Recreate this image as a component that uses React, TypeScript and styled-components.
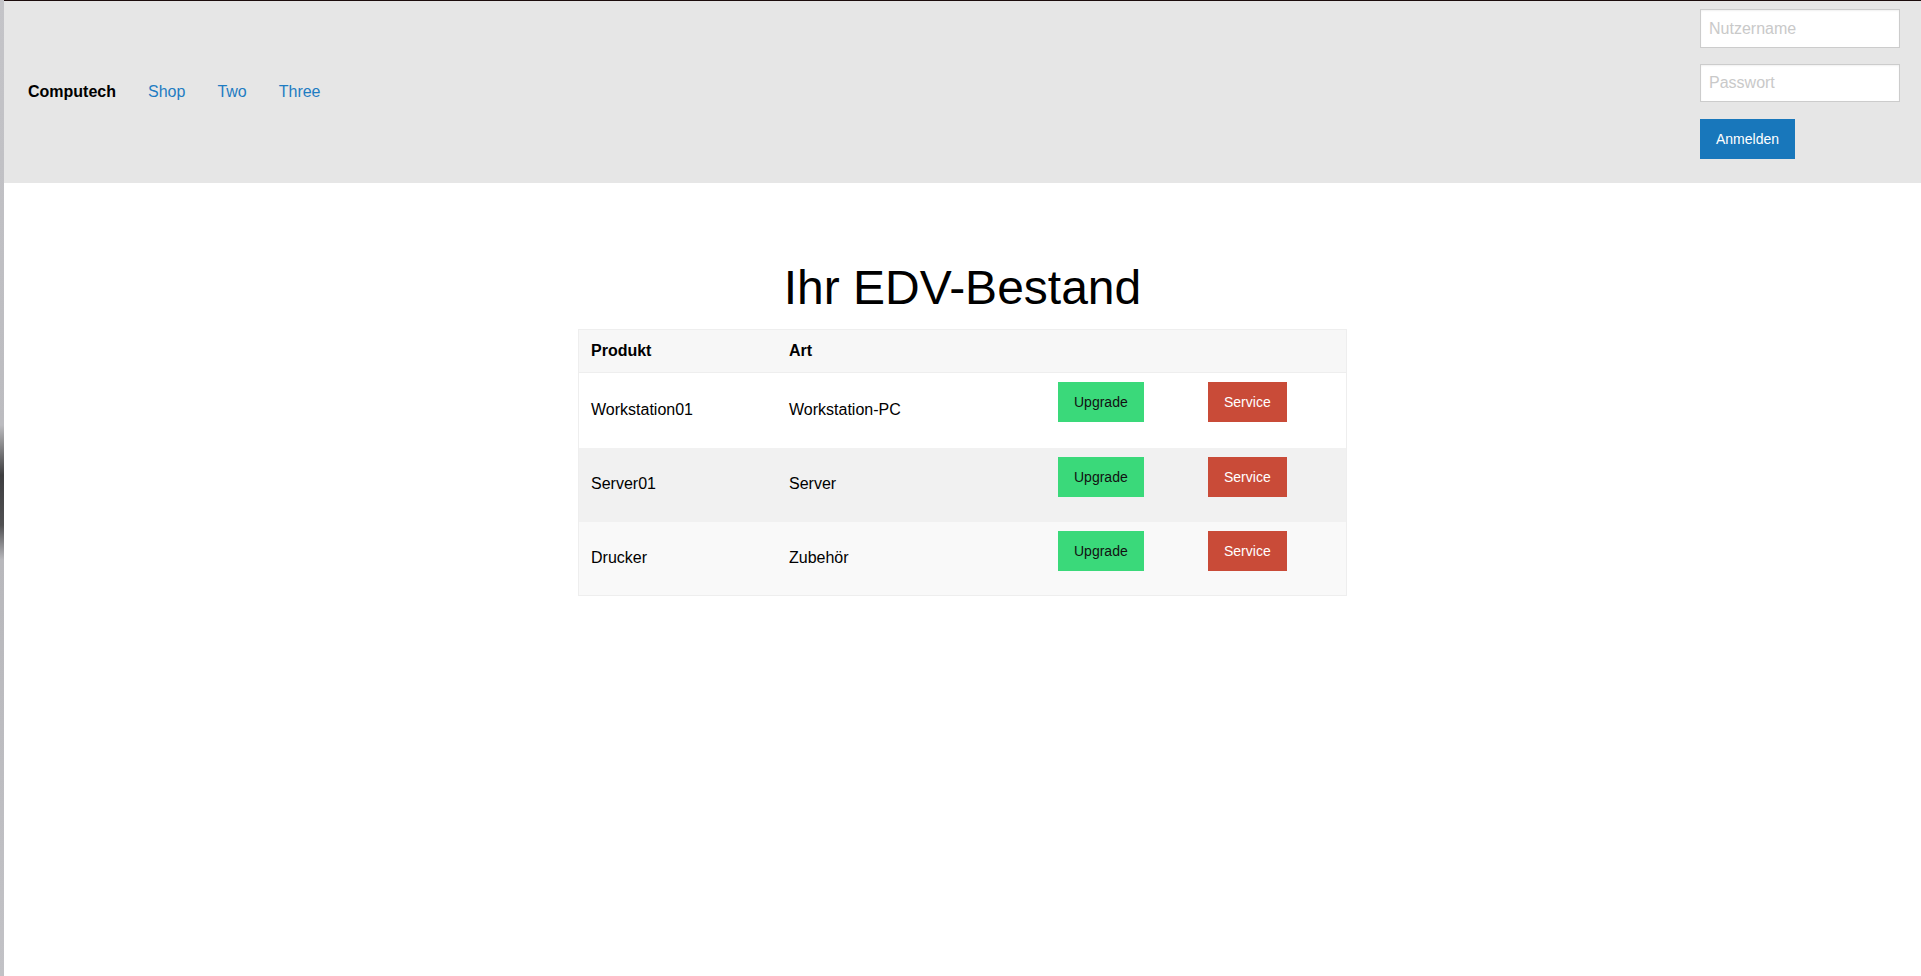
import React from "react";
import styled, { createGlobalStyle } from "styled-components";

const Global = createGlobalStyle`
  html, body { margin: 0; padding: 0; }
  body {
    font-family: "Liberation Sans", Arial, sans-serif;
    background: linear-gradient(
      to bottom,
      #c4c4c8 0px,
      #bcbcc0 425px,
      #8a8a8c 445px,
      #3e3e40 475px,
      #505052 525px,
      #b8b8bc 560px,
      #c2c2c6 976px
    );
    min-height: 976px;
  }
`;

const Page = styled.div`
  margin-left: 4px;
  min-height: 976px;
  background: #ffffff;
  display: flex;
  flex-direction: column;
`;

const Header = styled.header`
  height: 182px;
  border-top: 1px solid #1c0c0c;
  background: #e6e6e6;
  display: flex;
  justify-content: space-between;
  align-items: stretch;
  padding: 0 21px 0 24px;
`;

const Nav = styled.nav`
  display: flex;
  align-items: center;
  gap: 32px;
  font-size: 16px;
  padding-bottom: 1px;
`;

const Brand = styled.span`
  font-weight: bold;
  color: #000;
`;

const NavLink = styled.a`
  color: #1e7cc2;
  text-decoration: none;
`;

const LoginForm = styled.form`
  display: flex;
  flex-direction: column;
  align-items: flex-start;
  padding-top: 8px;
  width: 200px;
`;

const Input = styled.input<{ $h: number }>`
  box-sizing: border-box;
  width: 200px;
  height: ${(p) => p.$h}px;
  border: 1px solid #cccccc;
  box-shadow: inset 0 1px 2px rgba(0, 0, 0, 0.06);
  background: #fff;
  padding: 0 8px;
  font-family: "Liberation Sans", Arial, sans-serif;
  font-size: 16px;
  margin: 0 0 16px 0;
  outline: none;
  &::placeholder { color: #c9c9c9; }
`;

const LoginButton = styled.button`
  margin-top: 1px;
  height: 40px;
  padding: 0 16px;
  border: none;
  background: #1877bb;
  color: #fff;
  font-family: "Liberation Sans", Arial, sans-serif;
  font-size: 14px;
  cursor: pointer;
`;

const Main = styled.main`
  display: flex;
  flex-direction: column;
  align-items: center;
  padding-top: 77px;
`;

const Title = styled.h1`
  margin: 0 0 14px 0;
  font-size: 48px;
  font-weight: normal;
  line-height: 55px;
  color: #000;
`;

const Table = styled.div`
  width: 769px;
  box-sizing: border-box;
  border: 1px solid #eeeeee;
  font-size: 16px;
  color: #000;
`;

const cols = "198px 269px 150px 1fr";

const HeadRow = styled.div`
  display: grid;
  grid-template-columns: ${cols};
  height: 42px;
  align-items: center;
  background: #f7f7f7;
  border-bottom: 1px solid #eeeeee;
  font-weight: bold;
`;

const Row = styled.div<{ $bg: string; $h: number }>`
  display: grid;
  grid-template-columns: ${cols};
  height: ${(p) => p.$h}px;
  background: ${(p) => p.$bg};
`;

const Cell = styled.div`
  padding: 0 12px 2px 12px;
  display: flex;
  align-items: center;
`;

const HeadCell = styled.div`
  padding: 0 12px;
`;

const ActionCell = styled.div`
  padding: 9px 12px 0 12px;
  display: flex;
  align-items: flex-start;
`;

const ActionButton = styled.button<{ $variant: "upgrade" | "service" }>`
  height: 40px;
  padding: 0 16px;
  border: none;
  font-family: "Liberation Sans", Arial, sans-serif;
  font-size: 14px;
  background: ${(p) => (p.$variant === "upgrade" ? "#3ad97a" : "#c94b38")};
  color: ${(p) => (p.$variant === "upgrade" ? "#111" : "#fff")};
  cursor: pointer;
`;

const items = [
  { name: "Workstation01", type: "Workstation-PC", bg: "#ffffff", h: 75 },
  { name: "Server01", type: "Server", bg: "#f1f1f1", h: 74 },
  { name: "Drucker", type: "Zubehör", bg: "#f9f9f9", h: 73 },
];

export default function App() {
  return (
    <>
      <Global />
      <Page>
        <Header>
          <Nav>
            <Brand>Computech</Brand>
            <NavLink href="#">Shop</NavLink>
            <NavLink href="#">Two</NavLink>
            <NavLink href="#">Three</NavLink>
          </Nav>
          <LoginForm onSubmit={(e) => e.preventDefault()}>
            <Input $h={39} placeholder="Nutzername" />
            <Input $h={38} type="password" placeholder="Passwort" />
            <LoginButton type="submit">Anmelden</LoginButton>
          </LoginForm>
        </Header>
        <Main>
          <Title>Ihr EDV-Bestand</Title>
          <Table>
            <HeadRow>
              <HeadCell>Produkt</HeadCell>
              <HeadCell>Art</HeadCell>
              <HeadCell />
              <HeadCell />
            </HeadRow>
            {items.map((it) => (
              <Row key={it.name} $bg={it.bg} $h={it.h}>
                <Cell>{it.name}</Cell>
                <Cell>{it.type}</Cell>
                <ActionCell>
                  <ActionButton $variant="upgrade">Upgrade</ActionButton>
                </ActionCell>
                <ActionCell>
                  <ActionButton $variant="service">Service</ActionButton>
                </ActionCell>
              </Row>
            ))}
          </Table>
        </Main>
      </Page>
    </>
  );
}
